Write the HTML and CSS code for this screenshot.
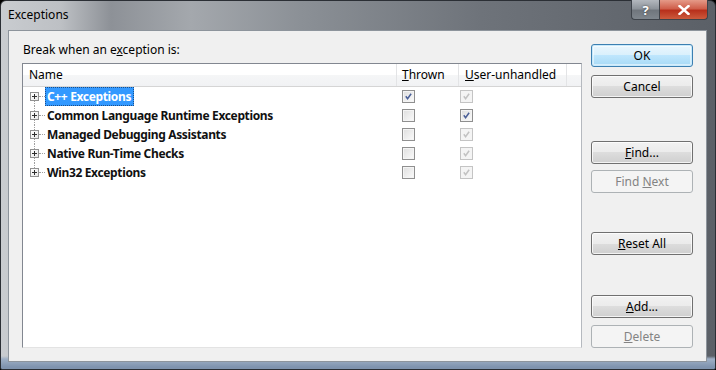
FILE: index.html
```html
<!DOCTYPE html>
<html lang="en">
<head>
  <meta charset="UTF-8">
  <title>Exceptions</title>
  <link rel="stylesheet" href="styles.css">
</head>
<body>
  <div class="window">
    <div class="titlebar">
      <span class="title">Exceptions</span>
      <div class="caption-buttons">
        <span class="cap-btn help">?</span>
        <span class="cap-btn close">
          <svg width="12" height="10" viewBox="0 0 12 10"><path d="M1.5 1 L10.5 9 M10.5 1 L1.5 9" stroke="#fff" stroke-width="2.4" stroke-linecap="square"/></svg>
        </span>
      </div>
    </div>

    <div class="client">
      <div class="main">
        <div class="prompt">Break when an e<u>x</u>ception is:</div>

        <div class="listbox">
          <div class="header">
            <div class="col col-name">Name</div>
            <div class="col col-thrown"><u>T</u>hrown</div>
            <div class="col col-user"><u>U</u>ser-unhandled</div>
            <div class="col col-fill"></div>
          </div>

          <div class="rows">
            <div class="row first">
              <div class="cell cell-name"><span class="expander"></span><span class="label selected">C++ Exceptions</span></div>
              <div class="cell cell-thrown"><span class="check checked"><svg viewBox="0 0 13 13"><path d="M3.3 6.3 L5.4 9 L9.6 3.2"/></svg></span></div>
              <div class="cell cell-user"><span class="check checked disabled"><svg viewBox="0 0 13 13"><path d="M3.3 6.3 L5.4 9 L9.6 3.2"/></svg></span></div>
            </div>
            <div class="row">
              <div class="cell cell-name"><span class="expander"></span><span class="label">Common Language Runtime Exceptions</span></div>
              <div class="cell cell-thrown"><span class="check"></span></div>
              <div class="cell cell-user"><span class="check checked"><svg viewBox="0 0 13 13"><path d="M3.3 6.3 L5.4 9 L9.6 3.2"/></svg></span></div>
            </div>
            <div class="row">
              <div class="cell cell-name"><span class="expander"></span><span class="label">Managed Debugging Assistants</span></div>
              <div class="cell cell-thrown"><span class="check"></span></div>
              <div class="cell cell-user"><span class="check checked disabled"><svg viewBox="0 0 13 13"><path d="M3.3 6.3 L5.4 9 L9.6 3.2"/></svg></span></div>
            </div>
            <div class="row">
              <div class="cell cell-name"><span class="expander"></span><span class="label">Native Run-Time Checks</span></div>
              <div class="cell cell-thrown"><span class="check"></span></div>
              <div class="cell cell-user"><span class="check checked disabled"><svg viewBox="0 0 13 13"><path d="M3.3 6.3 L5.4 9 L9.6 3.2"/></svg></span></div>
            </div>
            <div class="row last">
              <div class="cell cell-name"><span class="expander"></span><span class="label">Win32 Exceptions</span></div>
              <div class="cell cell-thrown"><span class="check"></span></div>
              <div class="cell cell-user"><span class="check checked disabled"><svg viewBox="0 0 13 13"><path d="M3.3 6.3 L5.4 9 L9.6 3.2"/></svg></span></div>
            </div>
          </div>
        </div>
      </div>

      <div class="buttons">
        <button class="btn default btn-ok">OK</button>
        <button class="btn btn-cancel">Cancel</button>
        <button class="btn btn-find"><u>F</u>ind...</button>
        <button class="btn btn-next" disabled>Find <u>N</u>ext</button>
        <button class="btn btn-reset"><u>R</u>eset All</button>
        <button class="btn btn-add"><u>A</u>dd...</button>
        <button class="btn btn-delete" disabled><u>D</u>elete</button>
      </div>
    </div>
  </div>
</body>
</html>
```

FILE: styles.css
```css
html, body { margin: 0; padding: 0; background: #000; }
body { width: 716px; height: 370px; overflow: hidden; font-family: "Noto Sans", "DejaVu Sans", sans-serif; font-size: 12px; color: #000; }

/* window frame */
.window {
  width: 716px; height: 370px; box-sizing: border-box;
  display: flex; flex-direction: column;
  border: 1px solid #2b2f35; border-radius: 6px 6px 2px 2px;
  background:
    linear-gradient(to bottom, rgba(0,0,0,0) 0, rgba(0,0,0,0) 355px, #9fb0c6 358px, #7f93ae 366px),
    linear-gradient(to right, #c9ccd0 0, #bdc0c4 60px, #8d9197 110px, #a4a8ad 190px, #8b9096 300px, #6e737a 480px, #5b6067 100%);
}
.titlebar { height: 29px; display: flex; align-items: flex-start; justify-content: space-between; }
.title { margin: 6px 0 0 7px; line-height: 16px; color: #000; }
.caption-buttons { display: flex; margin-right: 7px; margin-top: -1px; }
.cap-btn {
  height: 20px; display: flex; align-items: center; justify-content: center;
  border: 1px solid #3e434a; border-top: none; box-sizing: border-box;
  color: #fff; font-weight: bold; font-size: 13px;
}
.help {
  width: 28px; border-radius: 0 0 0 4px; border-right: none;
  background: linear-gradient(to bottom, #b3b8be, #8e949b 45%, #70767d 55%, #7f868d);
  text-shadow: 0 0 2px #333;
}
.close {
  width: 49px; border-radius: 0 0 4px 0;
  background: linear-gradient(to bottom, #e59a88, #cf5f4b 45%, #b8301c 55%, #cc5a3c);
}

.client {
  flex: 1; display: flex; gap: 9px;
  margin: 0 8px 7px 7px; padding: 0 13px 0 13px;
  background: #f0f0f0; border: 1px solid #8d949c;
}

/* left side */
.main { width: 562px; }
.prompt { margin-top: 11px; padding-left: 1px; line-height: 15px; }
.listbox {
  margin-top: 6px; height: 285px; box-sizing: border-box;
  background: #fff;
  border: 1px solid; border-color: #828790 #b5b9bf #e3e3e3 #828790;
}
.header { display: flex; height: 22px; border-bottom: 1px solid #d5d5d5; background: linear-gradient(to bottom, #fff, #fff 50%, #f5f6f7 50%, #f1f2f4); }
.col { box-sizing: border-box; line-height: 22px; padding-left: 6px; border-right: 1px solid #e3e4e6; white-space: nowrap; }
.col-name { width: 374px; }
.col-thrown { width: 62px; padding-left: 5px; }
.col-user { width: 108px; padding-left: 6px; }
.col-fill { flex: 1; border-right: none; }

.row { display: flex; height: 19px; }
.cell { box-sizing: border-box; height: 19px; display: flex; align-items: center; }
.cell-name { width: 374px; position: relative; padding-left: 7px; }
.cell-thrown { width: 62px; padding-left: 5px; }
.cell-user { width: 108px; padding-left: 1px; }

/* tree lines */
.cell-name::before {
  content: ""; position: absolute; left: 11px; top: 0; bottom: 0;
  border-left: 1px dotted #a0a0a0;
}
.first .cell-name::before { top: 10px; }
.last .cell-name::before { bottom: 10px; }
.cell-name::after {
  content: ""; position: absolute; left: 16px; width: 6px; top: 9px;
  border-top: 1px dotted #a0a0a0;
}
.expander {
  width: 9px; height: 9px; box-sizing: border-box; position: relative; z-index: 1;
  border: 1px solid #919191; background: linear-gradient(135deg, #fff, #e8e8e8);
  margin-right: 6px;
}
.expander::before { content: ""; position: absolute; left: 1px; top: 3px; width: 5px; height: 1px; background: #2e2e2e; }
.expander::after { content: ""; position: absolute; left: 3px; top: 1px; width: 1px; height: 5px; background: #2e2e2e; }
.label { font-weight: bold; line-height: 17px; padding: 0 1px; border: 1px solid transparent; white-space: nowrap; letter-spacing: -0.35px; color: #111; }
.label.selected { background: #3399ff; color: #fff; border: 1px dotted #1c4f8a; padding-right: 2px; }

/* checkboxes */
.check {
  width: 13px; height: 13px; box-sizing: border-box; display: block;
  border: 1px solid #8f8f8f;
  background: linear-gradient(135deg, #dedede, #fbfbfb);
  box-shadow: inset 0 0 0 1px #f4f4f4;
}
.check svg { display: block; width: 11px; height: 11px; margin: 0; }
.check path { fill: none; stroke: #4a5f97; stroke-width: 1.8; }
.check.disabled { border-color: #c4c4c4; background: #f4f4f4; box-shadow: none; }
.check.disabled path { stroke: #c2c2c2; }

/* buttons */
.buttons { width: 102px; display: flex; flex-direction: column; }
.btn {
  height: 23px; width: 102px; padding: 0; margin: 0;
  font-family: inherit; font-size: 12px; color: #000;
  border: 1px solid #707070; border-radius: 3px;
  background: linear-gradient(to bottom, #f2f2f2 0, #ebebeb 50%, #dddddd 50%, #cfcfcf 100%);
  box-shadow: inset 0 0 0 1px rgba(255,255,255,0.75);
}
.btn.default {
  border-color: #3c7fb1;
  background: linear-gradient(to bottom, #eaf6fd 0, #d9f0fc 50%, #bee6fd 50%, #a7d9f5 100%);
  box-shadow: inset 0 0 0 1px #c8e9fb, inset 0 0 0 2px rgba(255,255,255,0.5);
}
.btn:disabled { border-color: #adb2b5; background: #f4f4f4; color: #838383; box-shadow: none; }
.btn-ok { margin-top: 13px; }
.btn-cancel { margin-top: 8px; }
.btn-find { margin-top: 43px; }
.btn-next { margin-top: 6px; }
.btn-reset { margin-top: 39px; }
.btn-add { margin-top: 40px; }
.btn-delete { margin-top: 7px; }
```
